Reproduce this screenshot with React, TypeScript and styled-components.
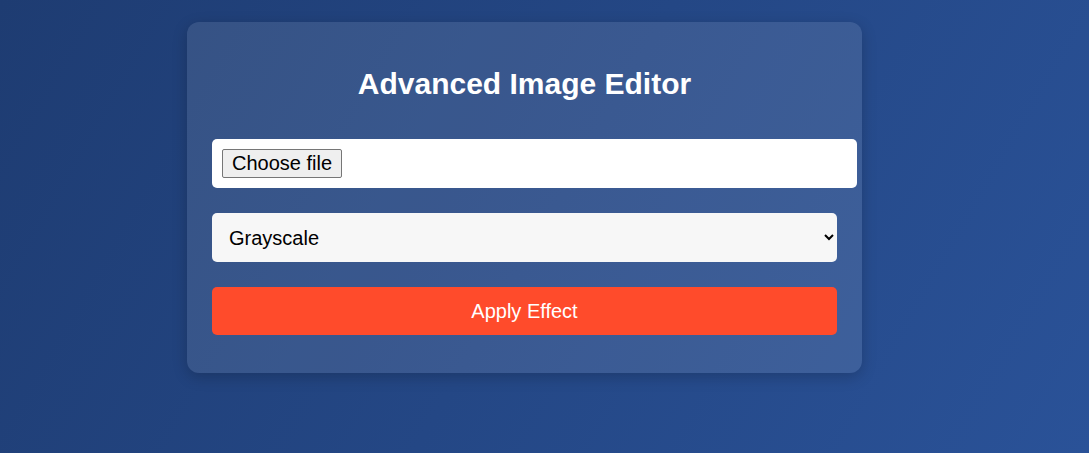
import styled, { createGlobalStyle } from 'styled-components';

const GlobalStyle = createGlobalStyle`
  html, body {
    margin: 0;
    padding: 0;
  }
  body {
    font-family: "Liberation Sans", Arial, sans-serif;
    background: linear-gradient(120deg, #1e3c72, #2a5298);
    min-height: 100vh;
  }
`;

const Page = styled.div`
  min-height: 100vh;
  display: flex;
  align-items: flex-start;
  padding: 22px 0 0 187px;
  box-sizing: border-box;
`;

const Card = styled.div`
  width: 675px;
  box-sizing: border-box;
  padding: 25px 25px 38px;
  background: rgba(255, 255, 255, 0.1);
  border-radius: 12px;
  box-shadow: 0 4px 15px rgba(0, 0, 0, 0.2);
  display: flex;
  flex-direction: column;
`;

const Title = styled.h1`
  margin: 20px 0 38px;
  color: #fff;
  font-size: 30px;
  font-weight: bold;
  text-align: center;
`;

const Form = styled.div`
  display: flex;
  flex-direction: column;
  gap: 25px;
`;

// file field: label box with a native-looking button inside
const FileField = styled.label`
  display: flex;
  align-items: center;
  width: 100%;
  box-sizing: content-box;
  height: 29px;
  padding: 10px;
  border-radius: 5px;
  background: #fff;
  cursor: pointer;

  input {
    display: none;
  }
`;

const FileButton = styled.span`
  display: inline-flex;
  align-items: center;
  height: 29px;
  box-sizing: border-box;
  padding: 0 9px;
  background: #efefef;
  border: 1px solid #767676;
  border-radius: 2px;
  font-size: 20px;
  color: #000;
`;

const Select = styled.select`
  width: 100%;
  height: 49px;
  box-sizing: border-box;
  padding: 0 15px 0 13px;
  border: none;
  border-radius: 5px;
  background: #f7f7f7;
  font-family: "Liberation Sans", Arial, sans-serif;
  font-size: 20px;
  color: #000;
`;

const Button = styled.button`
  width: 100%;
  height: 48px;
  border: none;
  border-radius: 5px;
  background: #ff4b2b;
  color: #fff;
  font-family: "Liberation Sans", Arial, sans-serif;
  font-size: 20px;
  cursor: pointer;
`;

export default function App() {
  return (
    <>
      <GlobalStyle />
      <Page>
        <Card>
          <Title>Advanced Image Editor</Title>
          <Form>
            <FileField>
              <FileButton>Choose file</FileButton>
              <input type="file" accept="image/*" />
            </FileField>
            <Select defaultValue="grayscale">
              <option value="grayscale">Grayscale</option>
              <option value="sepia">Sepia</option>
              <option value="invert">Invert</option>
              <option value="blur">Blur</option>
            </Select>
            <Button>Apply Effect</Button>
          </Form>
        </Card>
      </Page>
    </>
  );
}
